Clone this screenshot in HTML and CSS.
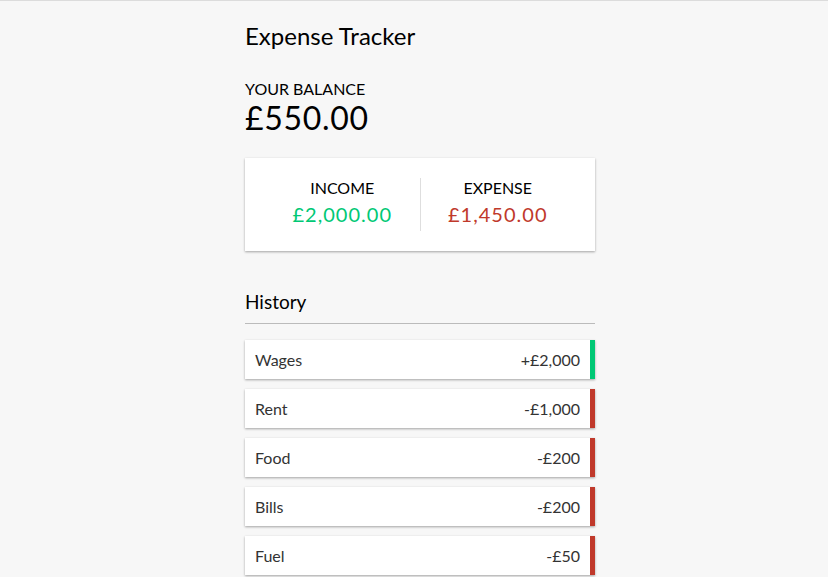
FILE: index.html
```html
<!DOCTYPE html>
<html lang="en">
<head>
<meta charset="UTF-8">
<title>Expense Tracker</title>
<link rel="stylesheet" href="styles.css">
</head>
<body>
<div class="container">
  <h2 class="title">Expense Tracker</h2>
  <h4 class="label">Your Balance</h4>
  <h1 class="balance">£550.00</h1>
  <div class="inc-exp">
    <div class="col">
      <h4 class="label">Income</h4>
      <p class="money plus">£2,000.00</p>
    </div>
    <div class="col">
      <h4 class="label">Expense</h4>
      <p class="money minus">£1,450.00</p>
    </div>
  </div>
  <h3 class="history">History</h3>
  <ul class="list">
    <li class="plus"><span>Wages</span><span>+£2,000</span></li>
    <li class="minus"><span>Rent</span><span>-£1,000</span></li>
    <li class="minus"><span>Food</span><span>-£200</span></li>
    <li class="minus"><span>Bills</span><span>-£200</span></li>
    <li class="minus"><span>Fuel</span><span>-£50</span></li>
  </ul>
</div>
</body>
</html>
```

FILE: styles.css
```css
* { box-sizing: border-box; }
html, body { margin: 0; }
body {
  background: #f7f7f7;
  border-top: 1px solid #dcdcdc;
  font-family: Lato, "Open Sans", sans-serif;
  color: #000;
  padding-left: 12px;
  min-height: 100vh;
}
.container {
  width: 350px;
  margin: 0 auto;
  padding-top: 20px;
}
.title {
  margin: 0;
  font-size: 24px;
  font-weight: 400;
  line-height: 29px;
}
.label {
  margin: 0;
  font-size: 16px;
  font-weight: 400;
  text-transform: uppercase;
  line-height: 19px;
}
.container > .label { margin-top: 29px; }
.balance {
  margin: 1px 0 0;
  font-size: 32px;
  font-weight: 400;
  line-height: 38px;
  letter-spacing: 0.7px;
}
.inc-exp {
  background: #fff;
  box-shadow: 0 1px 3px rgba(0,0,0,0.12), 0 1px 2px rgba(0,0,0,0.24);
  padding: 20px;
  display: flex;
  margin: 21px 0 0;
}
.col { flex: 1; text-align: center; }
.col:first-child { border-right: 1px solid #dedede; }
.money {
  font-size: 20px;
  letter-spacing: 1px;
  margin: 5px 0;
  line-height: 24px;
}
.plus.money { color: #00c875; }
.minus.money { color: #c0392b; }
.history {
  margin: 38px 0 10px;
  font-size: 19px;
  font-weight: 400;
  line-height: 24px;
  padding: 1px 0 9px;
  border-bottom: 1px solid #bbb;
}
.list {
  list-style: none;
  padding: 0;
  margin: 16px 0 40px;
}
.list li {
  background: #fff;
  box-shadow: 0 1px 3px rgba(0,0,0,0.12), 0 1px 2px rgba(0,0,0,0.24);
  color: #333;
  display: flex;
  justify-content: space-between;
  padding: 10px;
  margin: 10px 0;
  font-size: 16px;
  line-height: 19px;
}
.list li:first-child { margin-top: 0; }
.list li.plus { border-right: 5px solid #00c875; }
.list li.minus { border-right: 5px solid #c0392b; }
```
